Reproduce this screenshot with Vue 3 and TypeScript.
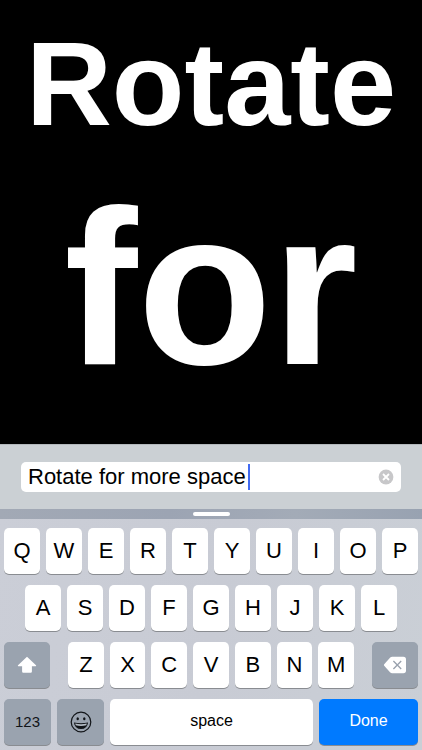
<script setup lang="ts">
import { computed, ref } from 'vue'

const message = ref('Rotate for more space')
const words = computed(() => message.value.split(' ').slice(0, 2))

const topRow: string[] = [...'QWERTYUIOP']
const middleRow: string[] = [...'ASDFGHJKL']
const bottomRow: string[] = [...'ZXCVBNM']

function press(character: string): void {
  message.value += character
}

function erase(): void {
  message.value = message.value.slice(0, -1)
}
</script>

<template>
  <main class="screen">
    <section class="stage" aria-live="polite">
      <p v-for="(word, i) in words" :key="i" :class="['word', i === 0 ? 'word-long' : 'word-short']">{{ word }}</p>
    </section>

    <form class="entry" @submit.prevent>
      <div class="field">
        <input v-model="message" class="text" type="text" size="19" aria-label="Message" />
        <span class="caret"></span>
        <button class="clear" type="button" aria-label="Clear text" @click="message = ''">
          <svg viewBox="0 0 16 16" width="16" height="16">
            <circle cx="8" cy="8" r="7.4" fill="#c7c7c9" />
            <path d="M5 5l6 6M11 5l-6 6" stroke="#fff" stroke-width="1.8" />
          </svg>
        </button>
      </div>
    </form>

    <div class="grip"><span class="handle"></span></div>

    <section class="keyboard" aria-label="Keyboard">
      <div class="row">
        <button v-for="k in topRow" :key="k" class="key" type="button" @click="press(k)">{{ k }}</button>
      </div>
      <div class="row inset">
        <button v-for="k in middleRow" :key="k" class="key" type="button" @click="press(k)">{{ k }}</button>
      </div>
      <div class="row spread">
        <button class="key dark side" type="button" aria-label="Shift">
          <svg viewBox="0 0 20 18" width="20" height="18">
            <path d="M10 .8L19 9.2Q19.6 10.2 18.6 10.2H14.9V15.6Q14.9 16.8 13.7 16.8H6.3Q5.1 16.8 5.1 15.6V10.2H1.4Q.4 10.2 1 9.2Z" fill="#fff" />
          </svg>
        </button>
        <div class="letters">
          <button v-for="k in bottomRow" :key="k" class="key" type="button" @click="press(k)">{{ k }}</button>
        </div>
        <button class="key dark side" type="button" aria-label="Delete" @click="erase">
          <svg viewBox="0 0 24 18" width="24" height="18">
            <path d="M1.2 8.2L7 1.7Q8 .8 9.2 .8H20.4Q23 .8 23 3.4V14.6Q23 17.2 20.4 17.2H9.2Q8 17.2 7 16.3L1.2 9.8Q.6 9 1.2 8.2Z" fill="#fff" />
            <path d="M10.4 5l7.8 8M18.2 5l-7.8 8" stroke="#98a1ad" stroke-width="1.3" />
          </svg>
        </button>
      </div>
      <div class="row functions">
        <button class="key dark small" type="button">123</button>
        <button class="key dark" type="button" aria-label="Emoji">
          <svg viewBox="0 0 22 22" width="22" height="22">
            <circle cx="11" cy="11" r="9.8" fill="none" stroke="#111418" stroke-width="1.2" />
            <ellipse cx="7.7" cy="7.8" rx="1.2" ry="1.5" fill="#111418" />
            <ellipse cx="14.3" cy="7.8" rx="1.2" ry="1.5" fill="#111418" />
            <path d="M3.9 11.4Q11 13 18.1 11.4Q17.2 18 11 18Q4.8 18 3.9 11.4Z" fill="#111418" />
            <path d="M5.2 12.5Q11 13.8 16.8 12.5L16.3 14.2Q11 15.6 5.7 14.2Z" fill="#b4bcc5" />
          </svg>
        </button>
        <button class="key label" type="button" @click="press(' ')">space</button>
        <button class="key label done" type="button">Done</button>
      </div>
    </section>
  </main>
</template>

<style>
body {
  margin: 0;
  background: #000;
}
</style>

<style scoped>
.screen {
  display: flex;
  flex-direction: column;
  min-height: 100vh;
  font-family: "Liberation Sans", Arial, sans-serif;
}

.stage {
  flex: 1;
  overflow: hidden;
  background: #000;
  color: #fff;
  text-align: center;
}

.word {
  margin: 0;
  font-weight: 700;
}

.word-long {
  font-size: 119px;
  line-height: 168px;
}

.word-short {
  font-size: 220px;
  line-height: 240px;
}

.entry {
  padding: 17px 21px;
  border-top: 1px solid #b3b8bc;
  background: #cbd0d4;
}

.field {
  display: flex;
  align-items: center;
  height: 30px;
  padding: 0 7px;
  border-radius: 5px;
  background: #fff;
}

.text {
  field-sizing: content;
  min-width: 0;
  margin: 0;
  padding: 0;
  border: 0;
  outline: 0;
  background: transparent;
  color: #000;
  font: 22px/28px "Liberation Sans", Arial, sans-serif;
}

.caret {
  width: 2px;
  height: 26px;
  margin-left: 2px;
  background: #426bf2;
}

.clear {
  display: flex;
  margin-left: auto;
  padding: 0;
  border: 0;
  background: none;
}

.grip {
  display: flex;
  align-items: center;
  justify-content: center;
  height: 10px;
  background: linear-gradient(90deg, #a2a9b5, #9ca4b3 40%, #a3abb7 70%, #98a2b1);
}

.handle {
  width: 37px;
  height: 4px;
  border-radius: 2px;
  background: #fff;
}

.keyboard {
  display: flex;
  flex-direction: column;
  gap: 11px;
  padding: 9px 4px 5px;
  background: linear-gradient(100deg, #cbced7, #c8cbd4 50%, #cacfd6);
}

.row,
.letters {
  display: flex;
  gap: 6px;
}

.inset {
  padding: 0 21px;
}

.spread {
  gap: 18px;
}

.letters {
  flex: 1;
}

.key {
  display: flex;
  flex: 1;
  align-items: center;
  justify-content: center;
  min-width: 0;
  height: 46px;
  padding: 0;
  border: 0;
  border-radius: 5px;
  background: #fff;
  box-shadow: 0 1px 0 #898c91;
  color: #000;
  font: 22px/26px "Liberation Sans", Arial, sans-serif;
}

.dark {
  background: #9aa3af;
  color: #111418;
}

.side {
  flex: 0 0 46px;
}

.functions {
  display: grid;
  grid-template-columns: 47px 47px 1fr 99px;
}

.small {
  font-size: 15px;
}

.label {
  padding-bottom: 2px;
  font-size: 16px;
}

.done {
  background: #007aff;
  color: #fff;
}
</style>
